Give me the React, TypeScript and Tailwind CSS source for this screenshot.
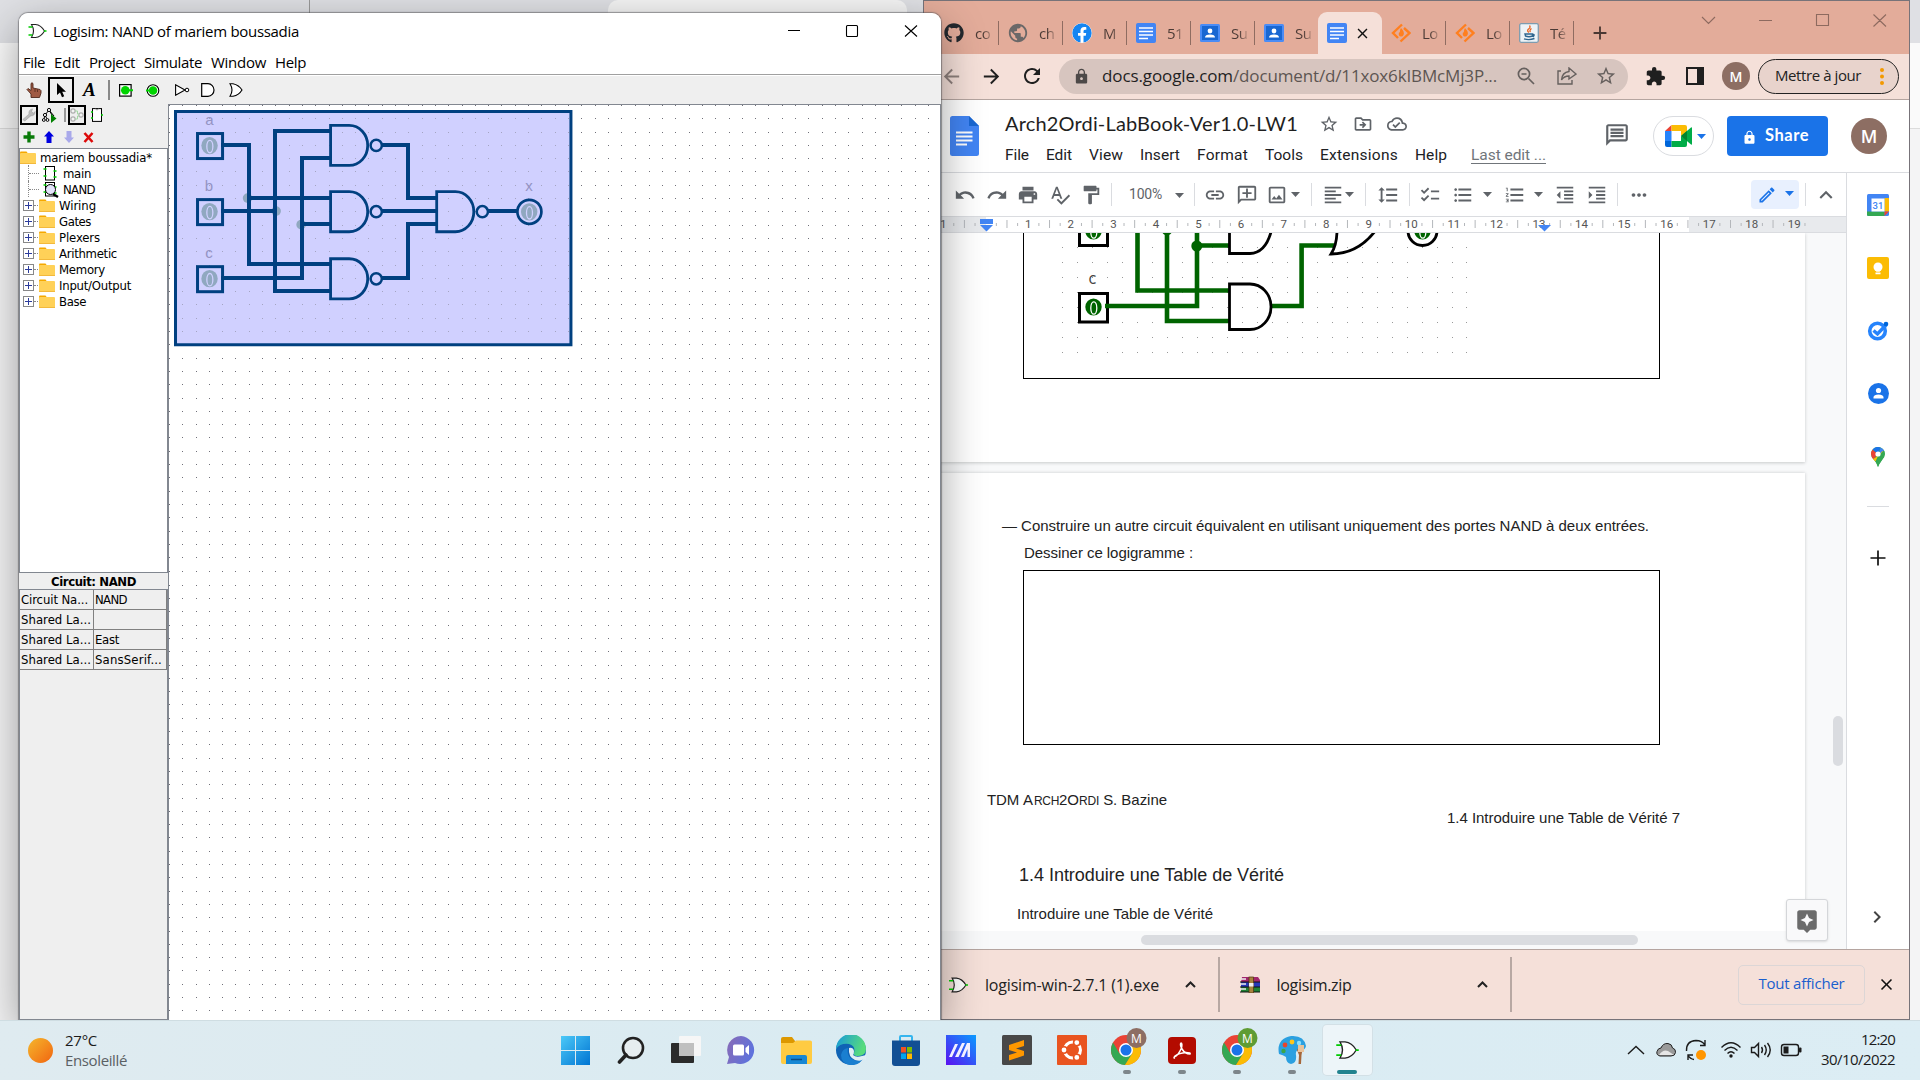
import React, { useLayoutEffect, useRef, useState } from "react";
import {
  MdUndo, MdRedo, MdPrint, MdSpellcheck, MdFormatPaint, MdLink, MdOutlineAddComment, MdOutlineImage,
  MdFormatAlignLeft, MdFormatLineSpacing, MdChecklist, MdFormatListBulleted, MdFormatListNumbered,
  MdFormatIndentDecrease, MdFormatIndentIncrease, MdMoreHoriz, MdOutlineEdit, MdKeyboardArrowUp,
  MdStarBorder, MdOutlineDriveFileMove, MdOutlineCloudDone, MdOutlineComment, MdLock, MdExtension,
  MdArrowBack, MdArrowForward, MdRefresh, MdAdd, MdClose, MdAssistant, MdPublic, MdKeyboardArrowRight,
} from "react-icons/md";
import { FaGithub, FaFacebook } from "react-icons/fa";

/* One line of text spread over a given width by its letter spacing. */
function Fit({ w, className = "", children }: { w: number; className?: string; children: string }) {
  const ref = useRef<HTMLSpanElement>(null);
  const [spacing, setSpacing] = useState(0);
  useLayoutEffect(() => {
    const el = ref.current;
    if (el) setSpacing((w - el.getBoundingClientRect().width) / children.length);
  }, []);
  return (
    <span ref={ref} className={"block w-fit shrink-0 whitespace-pre " + className} style={{ letterSpacing: spacing }}>
      {children}
    </span>
  );
}

/* ---------- Logisim ---------- */

const STEP = 13.3;
const gridPath = (() => {
  let d = "";
  for (let r = 0; r < 69; r++)
    for (let c = 0; c < 58; c++) d += `M${Math.floor(169.4 + c * STEP)} ${Math.floor(105.4 + r * STEP) + 0.5}h1`;
  return d;
})();

function Nand({ x, y }: { x: number; y: number }) {
  return (
    <g fill="none" stroke="#004080">
      <path d={`M${x + 20} ${y - 20}H${x + 1.4}V${y + 20}H${x + 20}A18.5 20 0 0 0 ${x + 20} ${y - 20}`} strokeWidth="2.8" />
      <circle cx={x + 47} cy={y} r="5.6" strokeWidth="2.5" />
    </g>
  );
}

function Zero({ x, y, fill, ink }: { x: number; y: number; fill: string; ink: string }) {
  return (
    <g>
      <ellipse cx={x} cy={y} rx="8.2" ry="8.6" fill={fill} />
      <ellipse cx={x + 0.3} cy={y + 1} rx="3" ry="6.2" fill={fill} stroke={ink} strokeWidth="1.3" />
    </g>
  );
}

function Canvas() {
  return (
    <svg className="block h-full w-full" viewBox="169 105 771 914" preserveAspectRatio="xMinYMin slice">
      <rect x="169" y="105" width="771" height="914" fill="#fff" />
      <rect x="175.5" y="111.5" width="395" height="233" fill="#d0d0ff" />
      <path d={gridPath} stroke="#6f6f78" shapeRendering="crispEdges" />
      <rect x="177" y="113" width="392" height="230" fill="#d0d0ff" opacity=".55" />
      <rect x="175.5" y="111.5" width="395" height="233" fill="none" stroke="#004080" strokeWidth="3" />
      <g fill="#90a8c0"><circle cx="247.5" cy="198" r="4.8" /><circle cx="276" cy="211" r="4.8" /><circle cx="301" cy="224.5" r="4.8" /></g>
      <g fill="none" stroke="#004080" strokeWidth="4" shapeRendering="crispEdges">
        <path d="M221 145H249V264H330M249 198H330M221 211H275M330 131H275V291H330M221 278H302V158H330M302 224H330" />
        <path d="M382 145H408V198H436M382 211H436M382 278H408V224H436M488 211H517" />
      </g>
      {[132, 198, 265].map((y) => (
        <g key={y}>
          <rect x="197.5" y={y + 1.5} width="25" height="25" fill="none" stroke="#004080" strokeWidth="3" />
          <Zero x={209.5} y={y + 13.5} fill="#90a8c0" ink="#d0d0ff" />
        </g>
      ))}
      <Nand x={329} y={145.4} /><Nand x={329} y={211.6} /><Nand x={329} y={278.6} /><Nand x={435} y={211.6} />
      <circle cx="529" cy="211.7" r="12" fill="none" stroke="#004080" strokeWidth="2.7" />
      <Zero x={528.8} y={211.7} fill="#90a8c0" ink="#d0d0ff" />
      <g fontFamily="Liberation Sans, sans-serif" fontSize="15" fill="#9494c4" textAnchor="middle">
        <text x="209.5" y="125">a</text><text x="209" y="191">b</text><text x="209" y="258">c</text><text x="528.5" y="191">x</text>
      </g>
    </svg>
  );
}

function Folder() {
  return (
    <svg className="h-[13px] w-4 shrink-0" viewBox="0 0 16 13">
      <path d="M0 1.5Q0 .5 1 .5H6.5L8 2.5V5H0Z" fill="#f5a800" /><rect y="2" width="16" height="11" rx="1" fill="#ffd158" /><path d="M0 12.5H16" stroke="#f3b93c" />
    </svg>
  );
}

function ChipIcon({ lens = false }: { lens?: boolean }) {
  return (
    <svg className="h-4 w-4 shrink-0 overflow-visible" viewBox="0 0 16 16">
      <path d="M3 1.5H13M3 15H13" stroke="#000" /><path d="M3.5 1V15M12.5 1V15" stroke="#000" />
      <path d="M1.5 4H4.5M1.5 11H4.5M11.5 6H14.5M11.5 12H14.5" stroke="#0c0" strokeWidth="1.3" />
      {lens && <><circle cx="8.5" cy="8.5" r="5" fill="#e4e4fa" stroke="#000" /><path d="M11 13L16 16" stroke="#000" strokeWidth="2.5" /></>}
    </svg>
  );
}

function TreeRow({ label, w }: { label: string; w: number }) {
  return (
    <div className="flex h-4 items-center">
      <div className="ml-[3px] flex h-[11px] w-[11px] items-center justify-center border border-[#888] bg-white">
        <svg className="h-[9px] w-[9px]" viewBox="0 0 9 9"><path d="M1 4.5H8M4.5 1V8" stroke="#2c3c9c" /></svg>
      </div>
      <div className="mr-px w-[4px] border-t border-dotted border-[#888]" />
      <Folder />
      <Fit w={w} className="ml-1 pt-px text-[13px] leading-[16px]">{label}</Fit>
    </div>
  );
}

function CircuitRow({ label, w, lens }: { label: string; w: number; lens?: boolean }) {
  return (
    <div className="ml-[8px] flex h-4 items-center border-l border-dotted border-[#888]">
      <div className="mr-[3px] w-[10px] border-t border-dotted border-[#888]" />
      <ChipIcon lens={lens} />
      <Fit w={w} className="ml-[5px] pt-px text-[13px] leading-[16px]">{label}</Fit>
    </div>
  );
}

function OrIcon({ className }: { className: string }) {
  return (
    <svg className={className} viewBox="0 0 18 16">
      <path d="M3 1.5H7Q12.5 2 16 8Q12.5 14 7 14.5H3Q7 8 3 1.5Z" fill="#fff" stroke="#222" strokeWidth="1.1" />
      <path d="M0 4H4M0 12H4M15.5 8H18" stroke="#0c0" strokeWidth="1.4" />
    </svg>
  );
}

function LogisimBars() {
  return (
    <div className="flex h-[28px] items-center bg-[#efefef] pl-[7px]">
      <svg className="h-4 w-4" viewBox="0 0 16 16"><path d="M5 15.5V12L1 7.5L2 6.5L5 8.5V1.5Q6 0 7 1.5V6L14 7.5Q15.5 8 15 11L13.5 15.5Z" fill="#a05a44" stroke="#50281c" strokeWidth=".9" /><path d="M9 7V10M11.5 7.5V10" stroke="#50281c" strokeWidth=".8" /></svg>
      <div className="ml-[6px] flex h-[26px] w-[26px] items-center justify-center border-2 border-black">
        <svg className="h-[15px] w-[12px]" viewBox="0 0 12 15"><path d="M2 0V12L5 9.4L7 14.3L9.2 13.3L7.2 8.7H11Z" /></svg>
      </div>
      <span className="ml-[9px] w-[14px] font-['Liberation_Serif',serif] text-[19px] font-bold italic leading-[22px]">A</span>
      <div className="ml-[11px] h-[20px] w-[2px] bg-[#888]" />
      <svg className="ml-[9px] h-[13px] w-[14px]" viewBox="0 0 14 13"><rect x=".6" y=".6" width="11.5" height="11.5" fill="#fff" stroke="#000" strokeWidth="1.2" /><circle cx="6.3" cy="6.3" r="4.3" fill="#00d400" /><path d="M8 6.3H14" stroke="#00d400" strokeWidth="2" /></svg>
      <svg className="ml-[13px] h-[13px] w-[14px]" viewBox="0 0 14 13"><circle cx="7" cy="6.5" r="5.8" fill="#fff" stroke="#000" strokeWidth="1.1" /><circle cx="7" cy="6.5" r="4.3" fill="#00d400" /><path d="M0 6.5H5" stroke="#00d400" strokeWidth="2" /></svg>
      <svg className="ml-[15px] h-[12px] w-[15px]" viewBox="0 0 15 12"><path d="M.6 .8V11.2L10 6Z" fill="#fff" stroke="#000" strokeWidth="1.1" /><circle cx="12" cy="6" r="1.8" fill="#fff" stroke="#000" /></svg>
      <svg className="ml-[11px] h-[14px] w-[14px]" viewBox="0 0 14 14"><path d="M.7 .7H7A6 6.3 0 0 1 7 13.3H.7Z" fill="#fff" stroke="#000" strokeWidth="1.2" /></svg>
      <svg className="ml-[14px] h-[14px] w-[15px]" viewBox="0 0 15 14"><path d="M1 .7Q5 7 1 13.3H4Q10 12 13 7Q10 2 4 .7Z" fill="#fff" stroke="#000" strokeWidth="1.1" /></svg>
    </div>
  );
}

const ATTRIBUTES = [
  { name: "Circuit Na...", nameW: 67, value: "NAND", valueW: 32 },
  { name: "Shared La...", nameW: 70, value: "", valueW: 0 },
  { name: "Shared La...", nameW: 70, value: "East", valueW: 24 },
  { name: "Shared La...", nameW: 70, value: "SansSerif...", valueW: 67 },
];

function LogisimSide() {
  return (
    <div className="flex w-[149px] shrink-0 flex-col bg-[#efefef] font-['DejaVu_Sans_Condensed','DejaVu_Sans',sans-serif]">
      <div className="flex h-[22px] items-center pl-px">
        <div className="flex h-[20px] w-[18px] items-center justify-center border-2 border-black">
          <svg className="h-4 w-4" viewBox="0 0 16 16"><path d="M1 13L8 7Q7 2 12 1L11 4L13 6L15 4Q15 9 10 9L3 15Z" fill="#bbb" stroke="#999" strokeWidth=".6" /></svg>
        </div>
        <svg className="ml-[4px] h-[16px] w-[15px]" viewBox="0 0 15 16"><path d="M7 3L3 8L2 12M7 3L10 8M3 8L5 12M7 3L12 9" fill="none" stroke="#000" /><g fill="#fff" stroke="#000"><circle cx="7" cy="3" r="1.6" /><circle cx="3" cy="8" r="1.6" /><circle cx="1.8" cy="13" r="1.4" /><circle cx="5.5" cy="13" r="1.4" /></g><path d="M9 7L14.5 11.5L9 16Z" fill="#008000" /></svg>
        <div className="ml-[7px] h-[14px] w-[2px] bg-[#999]" />
        <div className="ml-[2px] flex h-[20px] w-[18px] items-center justify-center border-2 border-black">
          <svg className="h-[15px] w-[14px]" viewBox="0 0 14 15"><g fill="#f4f4f4" stroke="#999"><rect x="1" y="1" width="4" height="4" rx="1" /><rect x="1" y="9" width="4" height="4" rx="1" /><rect x="9" y="5" width="4" height="4" rx="1" /></g><path d="M5 3H7.5V6H9M5 11H7.5V8H9" stroke="#a5d8a5" fill="none" /></svg>
        </div>
        <svg className="ml-[5px] h-[14px] w-[12px]" viewBox="0 0 12 14"><rect x="1.5" y=".6" width="9" height="12.8" fill="#fff" stroke="#000" /><path d="M4.5 1Q6 3 7.5 1" stroke="#999" fill="none" /><path d="M0 4H2M0 10H2M10 7H12" stroke="#0c0" strokeWidth="1.5" /></svg>
      </div>
      <div className="flex h-[22px] items-center pl-[4px]">
        <svg className="h-3 w-3" viewBox="0 0 12 12"><path d="M6 .5V11.5M.5 6H11.5" stroke="#087a08" strokeWidth="3.4" /></svg>
        <svg className="ml-[9px] h-[12px] w-[10px]" viewBox="0 0 10 12"><path d="M5 0L10 5.5H7.5V12H2.5V5.5H0Z" fill="#0000e0" /></svg>
        <svg className="ml-[10px] h-[12px] w-[10px]" viewBox="0 0 10 12"><path d="M5 12L10 6.5H7.5V0H2.5V6.5H0Z" fill="#a9a9ea" /></svg>
        <svg className="ml-[9px] h-[11px] w-[11px]" viewBox="0 0 11 11"><path d="M1.5 1L9.5 10M9.5 1L1.5 10" stroke="#dd0a0a" strokeWidth="2.6" /></svg>
      </div>
      <div className="h-[425px] shrink-0 border border-[#828790] bg-white">
        <div className="flex h-4 items-center"><Folder /><Fit w={112} className="ml-[4px] pt-px text-[13px] leading-[16px]">mariem boussadia*</Fit></div>
        <CircuitRow label="main" w={28} />
        <CircuitRow label="NAND" w={32} lens />
        <TreeRow label="Wiring" w={37} /><TreeRow label="Gates" w={32} /><TreeRow label="Plexers" w={41} /><TreeRow label="Arithmetic" w={58} />
        <TreeRow label="Memory" w={46} /><TreeRow label="Input/Output" w={72} /><TreeRow label="Base" w={27} />
      </div>
      <div className="flex h-[16px] shrink-0 justify-center"><Fit w={85} className="text-[13px] font-bold leading-[17px]">Circuit: NAND</Fit></div>
      <div className="min-h-0 flex-1 border border-[#828790]">
        {ATTRIBUTES.map((a, i) => (
          <div key={i} className="flex h-5 border-b border-[#808080] text-[13px] leading-[19px]">
            <div className="w-[74px] shrink-0 border-r border-[#808080] pl-px"><Fit w={a.nameW}>{a.name}</Fit></div>
            <div className="flex-1 border-r border-[#808080] pl-px">{a.value && <Fit w={a.valueW}>{a.value}</Fit>}</div>
          </div>
        ))}
      </div>
    </div>
  );
}

function Logisim() {
  const menu: [string, number][] = [["File", 22], ["Edit", 26], ["Project", 46], ["Simulate", 58], ["Window", 55], ["Help", 31]];
  return (
    <div className="absolute left-[19px] top-[13px] flex h-[1007px] w-[922px] flex-col overflow-hidden rounded-t-[9px] bg-white">
      <div className="flex h-[35px] shrink-0 items-start font-['Open_Sans',sans-serif]">
        <OrIcon className="ml-[9px] mt-[10px] h-4 w-[19px]" />
        <Fit w={246} className="ml-[6px] mt-[6px] text-[15px] leading-[24px]">Logisim: NAND of mariem boussadia</Fit>
        <div className="flex-1" />
        <svg className="mt-[11px] h-[14px] w-[131px]" viewBox="0 0 131 14"><g fill="none" stroke="#000" strokeWidth="1.1"><path d="M1 6.5H13" /><rect x="59.5" y="1.5" width="11" height="11" rx="1" /><path d="M118 1.5L130 12.5M130 1.5L118 12.5" /></g></svg>
        <div className="w-[23px]" />
      </div>
      <div className="flex h-[27px] shrink-0 gap-[9px] border-b border-[#a0a0a0] pl-[4px] font-['Open_Sans',sans-serif]">
        {menu.map(([t, w]) => <Fit key={t} w={w} className="mt-[2px] text-[15px] leading-[24px]">{t}</Fit>)}
      </div>
      <div className="h-px shrink-0 bg-white" />
      <LogisimBars />
      <div className="flex min-h-0 flex-1 bg-[#efefef]">
        <LogisimSide />
        <div className="min-w-0 flex-1 border-l border-r border-t border-[#828790]"><Canvas /></div>
      </div>
    </div>
  );
}

/* ---------- Chrome ---------- */

function DocsFav() {
  return <svg className="h-5 w-5 shrink-0" viewBox="0 0 20 20"><rect width="20" height="20" rx="2" fill="#4285f4" /><path d="M3 5H17M3 8.5H17M3 12H17M3 15.5H12" stroke="#fff" strokeWidth="1.7" /></svg>;
}
function ClassFav() {
  return <svg className="h-5 w-5 shrink-0" viewBox="0 0 20 20"><rect y="1" width="20" height="18" rx="1.5" fill="#4a8cf6" /><rect x="2" y="3" width="16" height="14" fill="#1967d2" /><circle cx="10" cy="8" r="2.4" fill="#fff" /><path d="M5 14.5Q5 11.5 10 11.5Q15 11.5 15 14.5Z" fill="#fff" /></svg>;
}
function SourceFav() {
  return <svg className="h-5 w-5 shrink-0" viewBox="0 0 20 20"><path d="M11 1.5L2 10L7 15M13 5L18.5 10L9.5 18.5" fill="none" stroke="#ff7f1f" strokeWidth="2.4" /><path d="M10 5Q14 9 12.5 12Q11.5 14 9.5 13.5Q7 12.5 8 9.5Q9 10 9 8Q9 6.5 10 5Z" fill="#ff7f1f" /></svg>;
}
function JavaFav() {
  return <svg className="h-5 w-5 shrink-0" viewBox="0 0 20 20"><rect x=".7" y=".7" width="18.6" height="18.6" rx="1.5" fill="#edf3f7" stroke="#7d9cb0" strokeWidth="1.3" /><path d="M10.5 2.5Q12 4.5 9.5 6Q7.5 8 10 9.5M12.5 5.5Q10 7.5 11.5 9" fill="none" stroke="#ec6420" strokeWidth="1.3" /><path d="M6 11H13.5V13Q10 14.5 6.5 13ZM13.5 11.5Q16.5 11 14 14M5 15.8Q10 17.5 15.5 15.5" fill="none" stroke="#2f668f" strokeWidth="1.4" /></svg>;
}

function Tab({ icon, text, last = false }: { icon: React.ReactNode; text: string; last?: boolean }) {
  return (
    <div className={"flex h-6 shrink-0 items-center pl-[9px] " + (last ? "w-[63px]" : "w-16 border-r-[1.5px] border-[#8f6c61]")}>
      {icon}
      <div className="ml-[11px] w-[20px] whitespace-nowrap bg-gradient-to-r from-[#4b3a35] from-40% to-[#dca694] to-90% bg-clip-text font-['Open_Sans',sans-serif] text-[15px] leading-5 tracking-[-0.5px] text-transparent">{text}</div>
    </div>
  );
}

function ChromeTop() {
  return (
    <>
      <div className="flex h-[53px] shrink-0 bg-[#e3ac9a]">
        <div className="flex h-[64px] items-center pl-[11px]">
          <Tab icon={<FaGithub className="h-5 w-5 shrink-0 text-[#24292e]" />} text="co" />
          <Tab icon={<MdPublic className="-mx-px h-[22px] w-[22px] shrink-0 text-[#6b6868]" />} text="ch" />
          <Tab icon={<FaFacebook className="h-5 w-5 shrink-0 rounded-full bg-white text-[#1485f2]" />} text="M" />
          <Tab icon={<DocsFav />} text="51" />
          <Tab icon={<ClassFav />} text="Su" />
          <Tab icon={<ClassFav />} text="Su" last />
        </div>
        <div className="mt-[11px] flex h-[42px] w-[64px] shrink-0 items-center rounded-t-[9px] bg-[#f5e0d9] pl-[9px]">
          <DocsFav />
          <MdClose className="ml-[7px] h-[17px] w-[17px] text-[#111]" />
        </div>
        <div className="flex h-[64px] items-center">
          <Tab icon={<SourceFav />} text="Lo" />
          <Tab icon={<SourceFav />} text="Lo" />
          <Tab icon={<JavaFav />} text="Té" />
          <MdAdd className="ml-[15px] h-[22px] w-[22px] text-[#4a3833]" />
        </div>
        <div className="flex-1" />
        <svg className="mr-[22px] mt-[12px] h-[14px] w-[186px]" viewBox="0 0 186 14"><path d="M1 4L7.5 10.5L14 4M58 7.5H71M115.5 1.5H127.5V12.5H115.5ZM172.5 1.5L185 13.5M185 1.5L172.5 13.5" fill="none" stroke="#8d6a5f" strokeWidth="1.1" /></svg>
      </div>
      <div className="flex h-[46px] shrink-0 items-center border-b border-[#b5a5a0] bg-[#f5e0d9] pl-[16px] pb-px">
        <MdArrowBack className="h-[23px] w-[23px] text-[#8f817d]" />
        <MdArrowForward className="ml-[17px] h-[23px] w-[23px] text-[#1f1f1f]" />
        <MdRefresh className="ml-[17px] h-[24px] w-[24px] text-[#1f1f1f]" />
        <div className="ml-[15px] flex h-[35px] w-[569px] shrink-0 items-center rounded-full bg-[#d7c5bf] pl-[14px] font-['Open_Sans',sans-serif] text-[17px] text-[#5d5552]">
          <MdLock className="h-[17px] w-[17px] text-[#4d4948]" />
          <Fit w={131} className="ml-[12px] text-[#1f1f1f]">docs.google.com</Fit>
          <Fit w={264}>/document/d/11xox6kIBMcMj3P...</Fit>
          <svg className="ml-[20px] h-[18px] w-[18px]" viewBox="0 0 18 18"><g fill="none" stroke="#66605e" strokeWidth="1.7"><circle cx="7" cy="7" r="5.6" /><path d="M11.5 11.5L17 17M4.5 7H9.5" /></g></svg>
          <svg className="ml-[22px] h-[18px] w-[20px]" viewBox="0 0 20 18"><g fill="none" stroke="#66605e" strokeWidth="1.4"><path d="M4 4H1V17H15V13" /><path d="M12 1L19 7L12 12V9Q7 9 4.5 13Q5 5.5 12 4.5Z" /></g></svg>
          <MdStarBorder className="ml-[18px] h-[22px] w-[22px] text-[#66605e]" />
        </div>
        <MdExtension className="ml-[17px] h-[21px] w-[21px] text-[#1f1f1f]" />
        <div className="ml-[20px] h-[18px] w-[18px] border-[2.5px] border-r-[7px] border-[#1f1f1f]" />
        <div className="ml-[18px] flex h-7 w-7 items-center justify-center rounded-full bg-[#8d6e63] font-['Open_Sans',sans-serif] text-[14px] font-semibold text-white">M</div>
        <div className="ml-[8px] flex h-[35px] w-[141px] items-center rounded-full border border-[#222] bg-[#e8d3cc] pl-[16px] font-['Open_Sans',sans-serif] text-[15px] text-[#222]">
          <Fit w={86} className="-mt-[2px]">Mettre à jour</Fit>
          <svg className="ml-[19px] h-[17px] w-[4px]" viewBox="0 0 4 17"><g fill="#f29900"><circle cx="2" cy="2" r="2" /><circle cx="2" cy="8.5" r="2" /><circle cx="2" cy="15" r="2" /></g></svg>
        </div>
      </div>
    </>
  );
}

const Sep = ({ className }: { className: string }) => <div className={"h-[23px] w-px shrink-0 bg-[#dadce0] " + className} />;
const Caret = ({ className }: { className: string }) => (
  <svg className={"h-[5px] w-[9px] shrink-0 " + className} viewBox="0 0 9 5"><path d="M0 0H9L4.5 5Z" fill="currentColor" /></svg>
);

function MeetIcon() {
  return (
    <svg className="h-[22px] w-[27px]" viewBox="0 0 27 22">
      <path d="M0 6L6.5 0V6Z" fill="#ea4335" /><path d="M6.5 0H20Q22 0 22 2V7L16 11V6H6.5Z" fill="#fbbc04" />
      <path d="M0 6H6.5V16H0Z" fill="#2684fc" /><path d="M0 16H6.5V22H2Q0 22 0 20Z" fill="#0066da" />
      <path d="M6.5 16H16V11L22 15V20Q22 22 20 22H6.5Z" fill="#00ac47" /><path d="M16 11L26 2.5Q27 2 27 3V19Q27 20 26 19.5Z" fill="#00ac47" /><path d="M16 11L22 6V16Z" fill="#00832d" />
    </svg>
  );
}

function DocsHeader() {
  const menu: [string, number][] = [["File", 24], ["Edit", 26], ["View", 34], ["Insert", 40], ["Format", 51], ["Tools", 38], ["Extensions", 78], ["Help", 32]];
  return (
    <div className="flex h-[73px] shrink-0 border-b border-[#dadce0] bg-white">
      <svg className="ml-[26px] mt-[16px] h-[40px] w-[29px]" viewBox="0 0 29 40"><path d="M2.5 0H19L29 10V37.5Q29 40 26.5 40H2.5Q0 40 0 37.5V2.5Q0 0 2.5 0Z" fill="#4285f4" /><path d="M19 0L29 10H19Z" fill="#1967d2" /><path d="M6 16.5H22.5M6 20.5H22.5M6 24.5H22.5M6 28.5H17" stroke="#fff" strokeWidth="1.8" /></svg>
      <div className="ml-[26px] flex flex-col">
        <div className="mt-[11px] flex h-[26px] items-center">
          <Fit w={293} className="-mt-[2px] font-[Lato,sans-serif] text-[20px] leading-[26px] text-[#1f1f1f]">Arch2Ordi-LabBook-Ver1.0-LW1</Fit>
          <MdStarBorder className="ml-[21px] h-[20px] w-[20px] text-[#5f6368]" />
          <MdOutlineDriveFileMove className="ml-[14px] h-[20px] w-[20px] text-[#5f6368]" />
          <MdOutlineCloudDone className="ml-[14px] h-[20px] w-[20px] text-[#5f6368]" />
        </div>
        <div className="mt-[7px] flex h-[22px] gap-[17px] font-[Roboto,sans-serif] text-[15.5px] leading-[22px] text-[#202124]">
          {menu.map(([t, w]) => <Fit key={t} w={w}>{t}</Fit>)}
          <Fit w={75} className="ml-[7px] text-[#70757a] underline underline-offset-[3px]">Last edit ...</Fit>
        </div>
      </div>
      <div className="flex-1" />
      <MdOutlineComment className="mr-[23px] mt-[22px] h-[26px] w-[26px] -scale-x-100 text-[#5f6368] [transform:none]" />
      <div className="mr-[13px] mt-[16px] flex h-[40px] w-[61px] items-center rounded-full border border-[#dadce0] pl-[11px]">
        <MeetIcon /><Caret className="ml-[5px] text-[#1a73e8]" />
      </div>
      <div className="mr-[23px] mt-[16px] flex h-[40px] w-[101px] items-center rounded bg-[#1a73e8] pl-[15px] font-[Lato,sans-serif] text-[16.5px] font-bold text-white">
        <MdLock className="mt-[2px] h-[15px] w-[15px]" /><Fit w={44} className="-mt-[2px] ml-[8px]">Share</Fit>
      </div>
      <div className="mr-[22px] mt-[18px] flex h-9 w-9 items-center justify-center rounded-full bg-[#8d6e63] font-['Open_Sans',sans-serif] text-[18px] font-semibold text-white">M</div>
    </div>
  );
}

function DocsToolbar() {
  const ic = "h-[22px] w-[22px] shrink-0 ";
  return (
    <div className="flex h-[43px] shrink-0 items-center bg-white text-[#5f6368]">
      <MdUndo className={ic + "ml-[30px]"} /><MdRedo className={ic + "ml-[10px]"} /><MdPrint className={ic + "ml-[9px]"} /><MdSpellcheck className={ic + "ml-[10px]"} /><MdFormatPaint className={ic + "ml-[9px]"} />
      <Sep className="ml-[9px]" />
      <Fit w={33} className="ml-[17px] font-[Roboto,sans-serif] text-[14px] text-[#5f6368]">100%</Fit>
      <Caret className="ml-[13px] mr-px mt-[2px]" /><Sep className="ml-[9px]" />
      <MdLink className={ic + "ml-[9px]"} /><MdOutlineAddComment className={ic + "ml-[10px] -scale-x-100"} /><MdOutlineImage className={ic + "ml-[8px]"} /><Caret className="ml-[3px] mr-px" />
      <Sep className="ml-[10px]" /><MdFormatAlignLeft className={ic + "ml-[10px]"} /><Caret className="ml-px mr-px" />
      <Sep className="ml-[10px]" /><MdFormatLineSpacing className={ic + "ml-[11px]"} />
      <Sep className="ml-[10px]" /><MdChecklist className={ic + "ml-[9px]"} /><MdFormatListBulleted className={ic + "ml-[11px]"} /><Caret className="ml-[9px] mr-px" />
      <MdFormatListNumbered className={ic + "ml-[11px]"} /><Caret className="ml-[8px] mr-px" /><MdFormatIndentDecrease className={ic + "ml-[10px]"} /><MdFormatIndentIncrease className={ic + "ml-[10px]"} />
      <Sep className="ml-[9px]" /><MdMoreHoriz className={ic + "ml-[10px]"} />
      <div className="ml-[101px] flex h-[29px] w-[48px] shrink-0 items-center rounded bg-[#e8f0fe] pl-[6px] text-[#1a73e8]"><MdOutlineEdit className="h-[20px] w-[20px]" /><Caret className="-mt-[2px] ml-[8px]" /></div>
      <Sep className="ml-[6px]" /><MdKeyboardArrowUp className="ml-[7px] h-[26px] w-[26px] shrink-0" />
    </div>
  );
}

function Ruler() {
  const u = 42.56;
  const zero = 985.7;
  return (
    <svg className="block h-[17px] w-full shrink-0" viewBox="924 216 922 17">
      <rect x="924" y="216" width="922" height="17" fill="#fff" />
      <rect x="924" y="217" width="62" height="15" fill="#e8eaed" /><rect x="1689" y="217" width="157" height="15" fill="#e8eaed" />
      <path d="M924 216.5H1846M924 232.5H1846" stroke="#dadce0" />
      {Array.from({ length: 21 }, (_, i) => i - 1).map((n) => {
        const x = zero + n * u;
        return (
          <g key={n}>
            {n !== 0 && n < 20 && <text x={x} y="228.2" textAnchor="middle" fontFamily="Roboto, sans-serif" fontSize="11.5" fill="#555">{Math.abs(n)}</text>}
            {n < 19 && <path d={`M${x + u / 2} 220V228`} stroke="#b4b7bb" />}
            {n < 20 && <path d={`M${x + u / 4} 223V226`} stroke="#b4b7bb" />}
            {n < 19 && <path d={`M${x + (u * 3) / 4} 223V226`} stroke="#b4b7bb" />}
          </g>
        );
      })}
      <path d="M980 219H993V224H980ZM980 225H993L986.5 231.5Z" fill="#4285f4" /><path d="M1538 225H1551L1544.5 231.5Z" fill="#4285f4" />
    </svg>
  );
}

function DocCircuit() {
  const G = "#006400";
  let d = "";
  for (let r = 0; r < 8; r++) for (let c = 0; c < 28; c++) d += `M${Math.round(1062.3 + c * 14.97)} ${Math.round(246.5 + r * 15) + 0.5}h1`;
  return (
    <svg className="block h-[146px] w-full" viewBox="1024 233 635 146">
      <path d={d} stroke="#999" />
      <g fill="#fff" stroke="#000" strokeWidth="3">
        <rect x="1079.5" y="217" width="28" height="28.5" /><rect x="1079.5" y="293.5" width="28" height="28.5" />
      </g>
      <Zero x={1093.5} y={231} fill={G} ink="#fff" /><Zero x={1093.5} y={307} fill={G} ink="#fff" />
      <path d="M1105 306H1197V230M1197 245.5H1229M1137.5 230V290.5H1229M1167 230V321H1229M1271 306H1301.6V245.5H1335" fill="none" stroke={G} strokeWidth="4.6" />
      <circle cx="1196.8" cy="246" r="5.5" fill={G} /><circle cx="1167" cy="230.5" r="5" fill={G} />
      <g fill="none" stroke="#000" strokeWidth="2.8">
        <path d="M1250 284H1229.5V329.500H1250A21 22.7 0 0 0 1250 284M1229.5 230V253.5H1250Q1266 253 1271.5 230" />
        <path d="M1337 230Q1337 245 1331 254Q1358 254 1376 230" /><circle cx="1422.500" cy="231" r="14.5" fill="#fff" />
      </g>
      <Zero x={1422.5} y={231} fill={G} ink="#fff" />
      <text x="1092.5" y="284" textAnchor="middle" fontFamily="DejaVu Sans Condensed, DejaVu Sans, sans-serif" fontSize="16" fill="#444">c</text>
    </svg>
  );
}

function DocsBody() {
  return (
    <div className="flex min-h-0 flex-1">
      <div className="relative flex w-[922px] shrink-0 flex-col bg-[#f8f9fa]">
        <DocsToolbar />
        <Ruler />
        <div className="flex min-h-0 flex-1 flex-col overflow-hidden font-['Liberation_Sans',sans-serif] text-[15px] leading-[20px] text-[#222]">
          <div className="h-[229px] w-[881px] shrink-0 bg-white shadow-[0_1px_3px_rgba(60,64,67,.25)]">
            <div className="ml-[99px] h-[146px] w-[637px] border-x border-b border-black"><DocCircuit /></div>
          </div>
          <div className="mt-[11px] flex h-[458px] w-[881px] shrink-0 flex-col bg-white shadow-[0_0_3px_rgba(60,64,67,.25)]">
            <Fit w={647} className="ml-[78px] mt-[43px]">— Construire un autre circuit équivalent en utilisant uniquement des portes NAND à deux entrées.</Fit>
            <Fit w={169} className="ml-[100px] mt-[7px]">Dessiner ce logigramme :</Fit>
            <div className="ml-[99px] mt-[7px] h-[175px] w-[637px] shrink-0 border border-black" />
            <div className="ml-[63px] mt-[45px] flex h-5 shrink-0">
              <Fit w={36}>{"TDM "}</Fit><Fit w={11}>A</Fit><Fit w={25} className="text-[12px] leading-[22px]">RCH</Fit><Fit w={20}>2O</Fit><Fit w={20} className="text-[12px] leading-[22px]">RDI</Fit><Fit w={68}>{" S. Bazine"}</Fit>
            </div>
            <Fit w={233} className="-mt-[2px] ml-[523px]">1.4 Introduire une Table de Vérité 7</Fit>
            <Fit w={265} className="ml-[95px] mt-[35px] text-[18px] leading-[24px]">1.4 Introduire une Table de Vérité</Fit>
            <Fit w={196} className="ml-[93px] mt-[17px]">Introduire une Table de Vérité</Fit>
          </div>
        </div>
        <div className="h-[18px] shrink-0 bg-[#f8f9fa] pt-[4px]"><div className="ml-[217px] h-[10px] w-[497px] rounded-full bg-[#dadce0]" /></div>
        <div className="absolute left-[909px] top-[543px] h-[50px] w-[10px] rounded-full bg-[#dadce0]" />
        <div className="absolute left-[862px] top-[726px] flex h-[42px] w-[42px] items-center justify-center rounded-[3px] border border-[#d4d6d9] bg-[#f9f9fa] shadow-sm"><MdAssistant className="mt-[2px] h-[26px] w-[26px] text-[#6b6b6b]" /></div>
      </div>
      <div className="flex flex-1 flex-col items-center border-l border-[#dadce0] bg-white">
        <svg className="mt-[21px] h-[22px] w-[22px]" viewBox="0 0 22 22"><rect width="22" height="22" rx="1.5" fill="#4285f4" /><path d="M17.5 4H22V17.5H17.5Z" fill="#fbbc04" /><path d="M0 17.5H17.5V22H1.5Q0 22 0 20.5Z" fill="#34a853" /><path d="M17.5 17.5H22L17.5 22Z" fill="#ea4335" /><rect x="4.5" y="4.5" width="13" height="13" fill="#fff" /><text x="11" y="14.5" fontFamily="Roboto, sans-serif" fontSize="9.5" fontWeight="500" fill="#4285f4" textAnchor="middle">31</text></svg>
        <svg className="mt-[41px] h-[22px] w-[22px]" viewBox="0 0 22 22"><rect width="22" height="22" rx="2" fill="#fbbc04" /><circle cx="11" cy="10" r="4.5" fill="#fff" /><path d="M9 12H13V14.5H9ZM8.5 15.5H13.5V17.3H8.5Z" fill="#fff" /></svg>
        <svg className="mt-[42px] h-[20px] w-[20px] overflow-visible" viewBox="0 0 20 20"><circle cx="9.5" cy="10" r="7.8" fill="none" stroke="#2684fc" strokeWidth="3.6" /><path d="M5.5 9.5L9.5 13L18.5 3.5" fill="none" stroke="#2684fc" strokeWidth="3.4" /><circle cx="18" cy="3" r="2.3" fill="#0066da" /></svg>
        <svg className="mt-[42px] h-[21px] w-[21px]" viewBox="0 0 21 21"><circle cx="10.5" cy="10.5" r="10.5" fill="#1a73e8" /><circle cx="10.5" cy="7.5" r="2.6" fill="#fff" /><path d="M5.5 15.5V14Q6 11.5 10.5 11.5Q15 11.5 15.5 14V15.5Z" fill="#fff" /></svg>
        <svg className="mt-[43px] h-[20px] w-[14px]" viewBox="0 0 14 20"><path d="M0 7A7 7 0 0 1 14 7Q14 10 11 13Q8 17 7 20Q6 16 3 13Q0 10 0 7Z" fill="#34a853" /><path d="M0 7Q0 4.5 1.6 2.6L7 7L2.3 12.2Q0 9.5 0 7Z" fill="#ea4335" /><path d="M1.6 2.6A7 7 0 0 1 9.5 .5L7 7Z" fill="#1a73e8" /><path d="M9.5 .5A7 7 0 0 1 13 3.5L7 10Z" fill="#4285f4" /><path d="M7 9L11.5 4L12 5L4.5 14.5L2 12Z" fill="#fbbc04" /><path d="M7 9L13 3.5Q15 8 11 13Q8 17 7 20Q6 17 4.5 14.5Z" fill="#34a853" /><circle cx="7" cy="7" r="2.6" fill="#fff" /></svg>
        <div className="mt-[39px] h-px w-[22px] bg-[#dadce0]" />
        <svg className="mt-[43px] h-[16px] w-[16px]" viewBox="0 0 16 16"><path d="M8 .5V15.5M.5 8H15.5" stroke="#111" strokeWidth="1.7" /></svg>
        <div className="flex-1" />
        <MdKeyboardArrowRight className="mb-[20px] mr-[2px] h-[24px] w-[24px] text-[#444]" />
      </div>
    </div>
  );
}

function Downloads() {
  const chev = <svg className="h-[7px] w-[11px] shrink-0" viewBox="0 0 11 7"><path d="M1 6L5.5 1.5L10 6" fill="none" stroke="#222" strokeWidth="2" /></svg>;
  return (
    <div className="flex h-[70px] shrink-0 items-center border-t border-[#b5a5a0] bg-[#f5e0d9] font-['Open_Sans',sans-serif] text-[16px] text-[#222]">
      <OrIcon className="ml-[25px] h-[18px] w-[19px] shrink-0" />
      <Fit w={174} className="ml-[17px]">logisim-win-2.7.1 (1).exe</Fit>
      <div className="w-[26px]" />{chev}
      <div className="ml-[22px] h-[55px] w-[1.5px] shrink-0 bg-[#b8a8a3]" />
      <svg className="ml-[20px] h-[17px] w-[20px] shrink-0" viewBox="0 0 20 17"><path d="M2 1H18L20 4V6H1Z" fill="#a2276e" /><path d="M1 6H20V11H1Z" fill="#2538b8" /><path d="M1 11H20V16H1Z" fill="#1f8034" /><path d="M0 6H20M0 11H20M0 16H20" stroke="#111" /><path d="M1 3H6M1 8H6M1 13H6" stroke="#eee" strokeWidth="1.5" /><rect x="9" y="1" width="4.5" height="16" fill="#a8823c" stroke="#4a3310" strokeWidth=".7" /><rect x="9" y="7" width="4.5" height="3.5" fill="#eee" /></svg>
      <Fit w={75} className="ml-[17px]">logisim.zip</Fit>
      <div className="w-[125px]" />{chev}
      <div className="ml-[22px] h-[55px] w-[2px] shrink-0 bg-[#b8a8a3]" />
      <div className="flex-1" />
      <div className="mr-[12px] flex h-[40px] w-[127px] items-center justify-center rounded-[5px] border border-[#dcd6d6] pb-[2px] text-[15px] text-[#1a5fce]"><Fit w={86}>Tout afficher</Fit></div>
      <MdClose className="mr-[13px] h-[19px] w-[19px] text-[#111]" />
    </div>
  );
}

function Chrome() {
  return (
    <div className="absolute left-[923px] top-0 flex h-[1020px] w-[987px] flex-col border border-[#777379] bg-white">
      <ChromeTop />
      <DocsHeader />
      <DocsBody />
      <Downloads />
    </div>
  );
}

/* ---------- Taskbar ---------- */

function ChromeLogo({ badge }: { badge: string }) {
  return (
    <svg className="-mt-2 ml-[3px] h-[38px] w-[38px]" viewBox="0 0 38 38">
      <circle cx="17" cy="23" r="15" fill="#ea4335" /><path d="M4 15.5A15 15 0 0 0 16 38L23.5 26.5L10.5 26.5Z" fill="#34a853" /><path d="M32 23A15 15 0 0 1 16 38L23.5 26L21 16.5H30.5Q32 19.5 32 23Z" fill="#fbbc04" />
      <circle cx="17" cy="23" r="7" fill="#fff" /><circle cx="17" cy="23" r="5.5" fill="#1a73e8" />
      <circle cx="27.5" cy="11" r="10" fill={badge} /><text x="27.5" y="15.5" textAnchor="middle" fontFamily="Open Sans, sans-serif" fontSize="12" fill="#fff">M</text>
    </svg>
  );
}

const APPS: { el: React.ReactNode; run?: boolean; active?: boolean }[] = [
  { el: <svg className="h-[29px] w-[29px]" viewBox="0 0 29 29"><defs><linearGradient id="w" x1="0" y1="0" x2="1" y2="1"><stop stopColor="#4cc9f8" /><stop offset="1" stopColor="#0074d2" /></linearGradient></defs><path d="M0 0H14V14H0ZM15 0H29V14H15ZM0 15H14V29H0ZM15 15H29V29H15Z" fill="url(#w)" /></svg> },
  { el: <svg className="h-[28px] w-[28px]" viewBox="0 0 28 28"><circle cx="16" cy="12" r="10" fill="#e6edf0" stroke="#222" strokeWidth="2.6" /><path d="M9 19L2.5 26" stroke="#222" strokeWidth="3.6" strokeLinecap="round" /></svg> },
  { el: <svg className="h-[28px] w-[30px]" viewBox="0 0 30 28"><rect y="7" width="23" height="20" rx="1" fill="#2b2b2b" /><rect x="8" width="22" height="20" rx="1" fill="#f6f6f6" /><rect x="8" y="7" width="15" height="13" fill="#bfbfbf" /></svg> },
  { el: <svg className="h-[28px] w-[28px]" viewBox="0 0 28 28"><defs><linearGradient id="t" x1="0" y1="0" x2="1" y2=".4"><stop stopColor="#8a6bb5" /><stop offset="1" stopColor="#5f72dc" /></linearGradient></defs><path d="M14 0A14 14 0 1 1 8 27L0 28L2 21A14 14 0 0 1 14 0Z" fill="url(#t)" /><rect x="6" y="8.5" width="11" height="11" rx="1.5" fill="#fff" /><path d="M18.5 12L22 9V19L18.5 16Z" fill="#fff" /></svg> },
  { el: <svg className="h-[27px] w-[31px]" viewBox="0 0 31 27"><path d="M0 2Q0 0 2 0H11L14 4V8H0Z" fill="#dd9800" /><path d="M0 6H12L15 3.5H29Q31 3.5 31 5V25Q31 27 29 27H2Q0 27 0 25Z" fill="#ffcb42" /><path d="M5 27V20Q5 18 7 18H24Q26 18 26 20V27Z" fill="#1787d4" /><path d="M10 22.5H21" stroke="#0a4d86" strokeWidth="1.5" /></svg> },
  { el: <svg className="h-[30px] w-[30px]" viewBox="0 0 30 30"><defs><linearGradient id="e" x1="0" y1="0" x2="1" y2=".3"><stop stopColor="#1597dc" /><stop offset="1" stopColor="#57dc7c" /></linearGradient></defs><circle cx="15" cy="15" r="15" fill="#0f63b5" /><path d="M0 14A15 15 0 0 1 30 14Q30 21 22 21Q17 21 18 18Q20 11 13 9Q4 8 0 14Z" fill="url(#e)" /><path d="M12 13Q10 22 18 25Q23 27 28 22.5Q23 31 14 30Q5 28 5 20Q6 14 12 13Z" fill="#1a7fd0" /><path d="M13 13Q17 12 18 16Q18 19 17 20Q20 23 26 21L30 20V25L28 24Q25 27 19 25Q12 22 13 13Z" fill="#e1eef4" /></svg> },
  { el: <svg className="h-[31px] w-[30px]" viewBox="0 0 30 31"><path d="M9 7V2Q9 1 10 1H20Q21 1 21 2V7" fill="none" stroke="#35b5ee" strokeWidth="2" /><path d="M1 5.5H29V28Q29 31 26 31H4Q1 31 1 28Z" fill="#124f94" /><path d="M10 12H15V17.5H10Z" fill="#f25022" /><path d="M16 12H21V17.5H16Z" fill="#7fba00" /><path d="M10 18.5H15V24H10Z" fill="#00a4ef" /><path d="M16 18.5H21V24H16Z" fill="#ffb900" /></svg> },
  { el: <svg className="h-[30px] w-[30px]" viewBox="0 0 30 30"><defs><linearGradient id="m" x1="1" y1="0" x2="0" y2="1"><stop stopColor="#0a9bff" /><stop offset="1" stopColor="#5b10f0" /></linearGradient></defs><rect width="30" height="30" fill="url(#m)" /><path d="M3 22L9 9H12L6 22ZM9 22L16 8H19L12.5 22ZM15 22L21 8H24V22H21.5V14L18 22Z" fill="#f3f0ff" /></svg> },
  { el: <svg className="h-[30px] w-[30px]" viewBox="0 0 30 30"><rect width="30" height="30" rx="1.5" fill="#484848" /><path d="M7 10L22 5V11L14 13.5L22 16V20.5L7 25.5V20L15 17.5L7 15Z" fill="#ff9800" /></svg> },
  { el: <div className="flex h-[30px] w-[30px] items-center justify-center rounded-[1px] bg-[#e95420]"><svg className="h-6 w-6" viewBox="0 0 24 24"><circle cx="12.5" cy="12" r="8" fill="none" stroke="#fff" strokeWidth="3" /><g fill="#fff" stroke="#e95420" strokeWidth="1.6"><circle cx="4" cy="12" r="3.2" /><circle cx="16.8" cy="4.6" r="3.2" /><circle cx="16.8" cy="19.4" r="3.2" /></g></svg></div> },
  { el: <ChromeLogo badge="#8d6e63" />, run: true },
  { el: <svg className="h-[27px] w-[28px]" viewBox="0 0 28 27"><rect width="28" height="27" rx="4" fill="#b30b00" /><path d="M6 20Q10 19 13.5 11Q14.5 6 13 6Q11.500 7 14 12Q17 17 22 17Q23 15.5 18 15.5Q11 16 7 19Q5 21.5 7 21" fill="none" stroke="#fff" strokeWidth="1.5" /></svg>, run: true },
  { el: <ChromeLogo badge="#5f9c33" />, run: true },
  { el: <svg className="h-[30px] w-[28px]" viewBox="0 0 28 30"><path d="M13 1Q26 0 28 11Q27 16 22 15Q17 15 18 20Q19 28 13 29Q8 28 8 22Q5 20 1 19Q-2 4 13 1Z" fill="#2ba0e0" /><circle cx="14" cy="7" r="2.4" fill="#ffc61a" /><circle cx="7" cy="10" r="2.4" fill="#e8452c" /><circle cx="5.5" cy="16" r="2.2" fill="#3aa648" /><circle cx="21" cy="8" r="2.2" fill="#8be0ff" /><path d="M22 10L25 12L23.5 20L23 29H20.5L21 20L19 15Z" fill="#a5673a" /><path d="M20 10H26V17H20Z" fill="#e8c39c" /></svg>, run: true },
  { el: <OrIcon className="h-[20px] w-[25px]" />, active: true },
];

function Taskbar() {
  return (
    <div className="absolute left-0 top-[1020px] flex h-[60px] w-[1920px] border-t border-[#cfdde2] bg-gradient-to-r from-[#dfebf0] via-[#d9ebf2] to-[#dcedf4]">
      <div className="flex w-[548px] shrink-0 pl-[28px] font-['Open_Sans',sans-serif] text-[15px] leading-[20px]">
        <div className="mt-[17px] h-[25px] w-[25px] rounded-full bg-gradient-to-br from-[#f3b62c] to-[#f0620f]" />
        <div className="ml-3 mt-[9px]"><Fit w={32} className="text-[#1b1b1b]">27°C</Fit><Fit w={62} className="text-[#5a6064]">Ensoleillé</Fit></div>
      </div>
      {APPS.map((a, i) => (
        <div key={i} className={"mx-[3.07px] mt-[4px] flex h-[50px] w-[49px] flex-col items-center rounded " + (a.active ? "bg-[#edf5f9] ring-1 ring-[#d3e0e6]" : "")}>
          <div className="flex h-[44px] items-center pt-[6px]">{a.el}</div>
          {a.run && <div className="mt-px h-[4px] w-2 rounded-full bg-[#7d868b]" />}
          {a.active && <div className="mt-px h-[4px] w-5 rounded-full bg-[#22838f]" />}
        </div>
      ))}
      <div className="flex-1" />
      <svg className="mt-[18px] h-[22px] w-[174px] overflow-visible" viewBox="1628 1039 174 22">
        <g fill="none" stroke="#1b1b1b" strokeWidth="1.4">
          <path d="M1628 1054L1636 1046.5L1644 1054" />
          <path d="M1686.5 1051Q1686 1041 1696 1040.5Q1702 1040.5 1705 1045M1705 1040V1045.5H1700M1688 1060V1055H1693M1688 1055Q1690 1059 1694 1059.5" />
          <path d="M1721.5 1047.5Q1731 1038 1740.5 1047.5M1724.5 1050.5Q1731 1044 1737.5 1050.5M1727.5 1053.5Q1731 1050 1734.5 1053.5" />
          <path d="M1751.5 1047.5H1754.5L1758.5 1043.5V1056.5L1754.5 1052.5H1751.5ZM1761.5 1047Q1763.5 1050 1761.5 1053M1764.5 1045Q1768 1050 1764.5 1055M1767.5 1043Q1773 1050 1767.5 1057" />
          <rect x="1781.5" y="1044.5" width="17" height="11" rx="2.5" />
        </g>
        <path d="M1660 1056Q1656 1055 1657 1051.5Q1658 1048 1661 1048Q1663 1043 1668 1043.5Q1672 1044 1672.5 1048Q1676 1049 1675.5 1052.5Q1675 1056 1671 1056Z" fill="#9a9a9a" stroke="#222" />
        <path d="M1659 1055Q1663 1049 1668 1051L1674 1055Z" fill="#e6e6e6" />
        <circle cx="1701" cy="1055" r="5" fill="#ff9500" /><circle cx="1731" cy="1056" r="1.7" fill="#1b1b1b" /><rect x="1783.5" y="1046.5" width="5" height="7" fill="#1b1b1b" /><rect x="1799" y="1047.5" width="2.5" height="5" rx="1" fill="#1b1b1b" />
      </svg>
      <div className="ml-[19px] mr-[25px] mt-[8px] flex w-[74px] flex-col font-['Open_Sans',sans-serif] text-[15px] leading-[20px] text-[#1b1b1b]">
        <Fit w={34} className="ml-[40px]">12:20</Fit><Fit w={74}>30/10/2022</Fit>
      </div>
    </div>
  );
}

export default function App() {
  return (
    <div className="relative h-[1080px] w-[1920px] overflow-hidden bg-[#f4f4f5]">
      <div className="flex h-[43px] items-start bg-[#dfe0e4]"><div className="ml-[309px] h-[43px] w-px bg-[#999]" /><div className="ml-[298px] h-[43px] w-[299px] rounded-t-[10px] bg-[#f4f4f4]" /></div>
      <div className="h-[86px] border-b border-[#dcdcdc] bg-[#fafafa]" />
      <Chrome />
      <div className="absolute left-[19px] top-[13px] h-[1007px] w-[922px] rounded-t-[9px] shadow-[0_14px_44px_rgba(0,0,0,.38),0_0_1px_1px_rgba(90,90,95,.55)]" />
      <Logisim />
      <Taskbar />
    </div>
  );
}
